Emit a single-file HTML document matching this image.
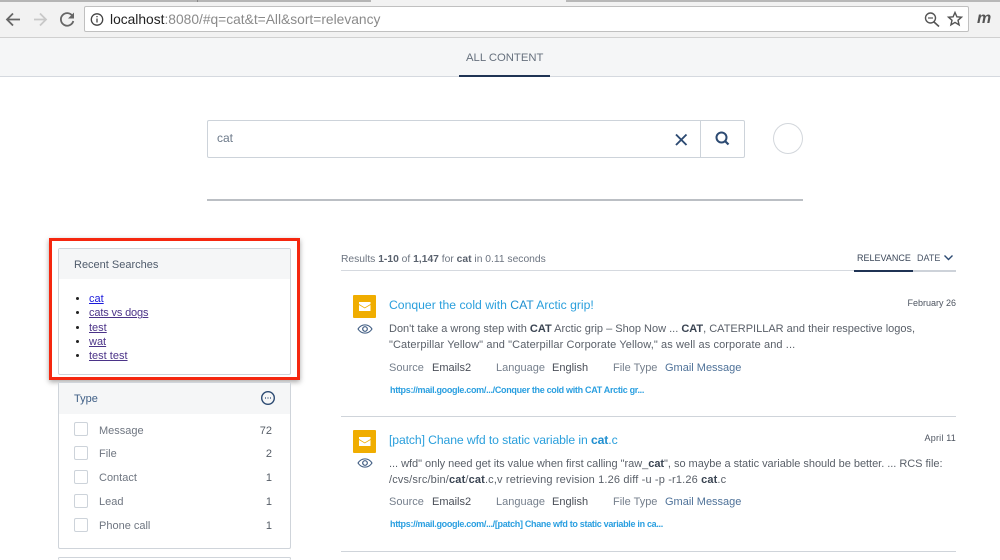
<!DOCTYPE html>
<html><head><meta charset="utf-8"><title>Search</title>
<style>
html,body{margin:0;padding:0;background:#fff;width:1000px;height:560px;overflow:hidden}
#p{width:1000px;height:560px;position:relative;overflow:hidden;font-family:"Liberation Sans",sans-serif;color:#4f5b6b}
.a{position:absolute;white-space:nowrap}
.t{position:absolute;white-space:nowrap;font-size:11px;line-height:14px}
b{font-weight:bold;color:#3a4452}
.box{position:absolute;left:58px;width:233px;background:#fff;border:1px solid #cfd4da;border-radius:2px;box-sizing:border-box}
.cb{position:absolute;left:74px;width:14px;height:14px;border:1px solid #cdd3da;border-radius:2px;box-sizing:border-box}
.lbl{color:#757f8c}
.val{color:#4a4f58}
.lnk{color:#2a9fe0;font-size:9px;font-weight:bold;letter-spacing:-.31px}
ul a{color:#4b3388;text-decoration:underline}
.s{font-size:11px;color:#5a6069}
</style></head><body><div id="p">

<!-- browser chrome -->
<div class="a" style="left:0;top:0;width:1000px;height:37px;background:#f2f2f2;border-bottom:1px solid #d0d0d0"></div>
<div class="a" style="left:0;top:0;width:371px;height:2px;background:#b5b5b5"></div>
<div class="a" style="left:197px;top:0;width:1px;height:2px;background:#888"></div>
<div class="a" style="left:566px;top:0;width:434px;height:2px;background:#b8b8b8"></div>
<div class="a" style="left:84px;top:6px;width:885px;height:26px;background:#fff;border:1px solid #c0c0c0;border-radius:2px;box-sizing:border-box"></div>
<svg class="a" style="left:0;top:0" width="110" height="37" fill="none">
<path d="M20 19.5H8M13 13.5l-6 6 6 6" stroke="#666" stroke-width="1.8"/>
<path d="M46 19.5H34M40 13.5l6 6-6 6" stroke="#c8c8c8" stroke-width="1.8"/>
<path d="M72.5 16a6.3 6.3 0 1 0 .8 5" stroke="#666" stroke-width="1.8"/>
<path d="M74 12.5v6h-6z" fill="#666"/>
<circle cx="97" cy="19.500" r="5.700" stroke="#444" stroke-width="1.300"/>
<path d="M97 18.500v4M97 16v1.300" stroke="#444" stroke-width="1.300"/>
</svg>
<div class="a" style="left:110px;top:12px;font-size:13.800px;line-height:15px;color:#8a8a8a"><span style="color:#222">localhost</span>:8080/#q=cat&amp;t=All&amp;sort=relevancy</div>
<svg class="a" style="left:920px;top:8px" width="80" height="24" fill="none">
<circle cx="10.500" cy="10" r="5" stroke="#555" stroke-width="1.400"/>
<path d="M14 14l5 4.500" stroke="#555" stroke-width="1.600"/>
<path d="M8 10h5" stroke="#555" stroke-width="1.200"/>
<path d="M35 4.500l1.900 4.300 4.600.4-3.500 3.100 1.100 4.600-4.100-2.500-4.100 2.500 1.100-4.600-3.500-3.100 4.600-.4z" stroke="#555" stroke-width="1.400"/>
</svg>
<div class="a" style="left:977px;top:10px;font-size:16px;line-height:18px;font-weight:bold;font-style:italic;color:#555">m</div>

<!-- tab bar -->
<div class="a" style="left:0;top:38px;width:1000px;height:38px;background:#f5f6f7;border-bottom:1px solid #d5d9df"></div>
<div class="a" style="left:459px;top:75px;width:91px;height:2px;background:#1f3354"></div>
<div class="a" style="left:466px;top:51px;font-size:11.300px;line-height:14px;color:#67717e">ALL CONTENT</div>

<!-- search -->
<div class="a" style="left:207px;top:120px;width:538px;height:38px;border:1px solid #cdd3da;border-radius:2px;box-sizing:border-box"></div>
<div class="a" style="left:700px;top:120px;width:1px;height:38px;background:#cdd3da"></div>
<div class="a" style="left:217px;top:130px;font-size:12px;line-height:16px;color:#6d7a8a">cat</div>
<svg class="a" style="left:670px;top:128px" width="70" height="24" fill="none">
<path d="M6 6.500l10.500 10.500M16.500 6.500L6 17" stroke="#2c4a72" stroke-width="1.900"/>
<circle cx="51.500" cy="9.500" r="5" stroke="#2c4a72" stroke-width="2"/>
<path d="M55 13l3.500 3.500" stroke="#2c4a72" stroke-width="2.200"/>
</svg>
<div class="a" style="left:773px;top:123px;width:30px;height:31px;border:1px solid #d3d7dc;border-radius:50%;box-sizing:border-box"></div>
<div class="a" style="left:207px;top:199px;width:596px;height:2px;background:#bbbfc4"></div>

<!-- recent searches -->
<div class="box" style="top:248px;height:127px">
<div style="height:30px;background:#f5f6f7"></div>
</div>
<div class="a" style="left:49px;top:238px;width:251px;height:142px;border:3px solid #f5270f;box-sizing:border-box;box-shadow:0 2px 5px rgba(0,0,0,.35)"></div>
<div class="t" style="left:74px;top:258px;color:#4f5b6b">Recent Searches</div>
<ul class="a" style="left:49px;top:292px;margin:0;padding:0 0 0 40px;font-size:11px;line-height:14.300px;color:#222">
<li><a style="color:#1a1adb">cat</a></li>
<li><a style="letter-spacing:-.15px">cats vs dogs</a></li>
<li><a>test</a></li>
<li><a>wat</a></li>
<li><a>test test</a></li>
</ul>

<!-- type facet -->
<div class="box" style="top:382px;height:167px">
<div style="height:31px;background:#f5f6f7"></div>
</div>
<div class="t" style="left:74px;top:392px;color:#3f5f86">Type</div>
<svg class="a" style="left:260px;top:390px" width="16" height="16" fill="none">
<circle cx="8" cy="8" r="6.300" stroke="#2c4a72" stroke-width="1.400"/>
<path d="M5 8h1M7.500 8h1M10 8h1" stroke="#2c4a72" stroke-width="1.300"/>
</svg>
<div class="cb" style="top:422px"></div><div class="t" style="left:99px;top:424px;color:#6f7681">Message</div><div class="t" style="left:252px;width:20px;text-align:right;top:424px;color:#555c66">72</div>
<div class="cb" style="top:446px"></div><div class="t" style="left:99px;top:447px;color:#6f7681">File</div><div class="t" style="left:252px;width:20px;text-align:right;top:447px;color:#555c66">2</div>
<div class="cb" style="top:470px"></div><div class="t" style="left:99px;top:471px;color:#6f7681">Contact</div><div class="t" style="left:252px;width:20px;text-align:right;top:471px;color:#555c66">1</div>
<div class="cb" style="top:494px"></div><div class="t" style="left:99px;top:495px;color:#6f7681">Lead</div><div class="t" style="left:252px;width:20px;text-align:right;top:495px;color:#555c66">1</div>
<div class="cb" style="top:518px"></div><div class="t" style="left:99px;top:519px;color:#6f7681">Phone call</div><div class="t" style="left:252px;width:20px;text-align:right;top:519px;color:#555c66">1</div>
<div class="box" style="top:557px;height:3px;border-bottom:0"></div>

<!-- results header -->
<div class="t" style="left:341px;color:#6c7480;font-size:10.300px;top:253px">Results <b style="color:#5a626e">1-10</b> of <b style="color:#5a626e">1,147</b> for <b style="color:#5a626e">cat</b> in 0.11 seconds</div>
<div class="a" style="left:341px;top:270px;width:615px;height:1px;background:#d5d9df"></div>
<div class="a" style="left:913px;top:270px;width:43px;height:2px;background:#cdd2d9"></div>
<div class="a" style="left:854px;top:270px;width:59px;height:2px;background:#1f3354"></div>
<div class="t" style="left:857px;top:251px;font-size:9px;color:#3a4658">RELEVANCE</div>
<div class="t" style="left:917px;top:251px;font-size:9px;color:#4a5668">DATE</div>
<svg class="a" style="left:943px;top:254px" width="11" height="8" fill="none"><path d="M1.500 1.500L5.500 5.500 9.500 1.500" stroke="#2c4a72" stroke-width="1.400"/></svg>

<!-- result 1 -->
<div class="a" style="left:353px;top:295px;width:23px;height:23px;background:#f0ad00;border-radius:1px"></div>
<svg class="a" style="left:353px;top:295px" width="23" height="23"><path d="M6 7h11.500v2l-5.750 3.500L6 9z" fill="#fff"/><path d="M6 10l5.750 3.400 5.750-3.400V16H6z" fill="#fff"/></svg>
<svg class="a" style="left:357px;top:323px" width="16" height="12" fill="none"><path d="M1 6c3.500-5.500 10.500-5.500 14 0-3.500 5.500-10.500 5.500-14 0z" stroke="#3d5a80" stroke-width="1.100"/><circle cx="8" cy="6" r="2.300" stroke="#3d5a80" stroke-width="1.200"/></svg>
<div class="a" style="left:389px;top:297px;font-size:12.200px;line-height:16px;color:#2a9fdc">Conquer the cold with <span style="color:#1f8fd0">CAT</span> Arctic grip!</div>
<div class="t" style="left:880px;width:76px;text-align:right;top:296px;font-size:9px;color:#4d5460">February 26</div>
<div class="t s" style="left:389px;top:322px">Don't take a wrong step with <b>CAT</b> Arctic grip – Shop Now ... <b>CAT</b>, CATERPILLAR and their respective logos,</div>
<div class="t s" style="left:389px;top:338px;letter-spacing:.1px">"Caterpillar Yellow" and "Caterpillar Corporate Yellow," as well as corporate and ...</div>
<div class="t lbl" style="left:389px;top:361px">Source</div><div class="t val" style="left:432px;top:361px">Emails2</div>
<div class="t lbl" style="left:496px;top:361px">Language</div><div class="t val" style="left:552px;top:361px">English</div>
<div class="t lbl" style="left:613px;top:361px">File Type</div><div class="t" style="left:665px;top:361px;color:#4f7299">Gmail Message</div>
<div class="t lnk" style="left:390px;top:383px">https://mail.google.com/.../Conquer the cold with CAT Arctic gr...</div>
<div class="a" style="left:341px;top:416px;width:615px;height:1px;background:#cfd4da"></div>

<!-- result 2 -->
<div class="a" style="left:353px;top:430px;width:23px;height:23px;background:#f0ad00;border-radius:1px"></div>
<svg class="a" style="left:353px;top:430px" width="23" height="23"><path d="M6 7h11.500v2l-5.750 3.500L6 9z" fill="#fff"/><path d="M6 10l5.750 3.400 5.750-3.400V16H6z" fill="#fff"/></svg>
<svg class="a" style="left:357px;top:457px" width="16" height="12" fill="none"><path d="M1 6c3.500-5.500 10.500-5.500 14 0-3.500 5.500-10.500 5.500-14 0z" stroke="#3d5a80" stroke-width="1.100"/><circle cx="8" cy="6" r="2.300" stroke="#3d5a80" stroke-width="1.200"/></svg>
<div class="a" style="left:389px;top:432px;font-size:12.200px;line-height:16px;letter-spacing:-.1px;color:#2a9fdc">[patch] Chane wfd to static variable in <span style="color:#1f8fd0;font-weight:bold">cat</span>.c</div>
<div class="t" style="left:880px;width:76px;text-align:right;top:431px;font-size:9px;letter-spacing:.2px;color:#4d5460">April 11</div>
<div class="t s" style="left:389px;top:457px;letter-spacing:-.03px">... wfd" only need get its value when first calling "raw_<b>cat</b>", so maybe a static variable should be better. ... RCS file:</div>
<div class="t s" style="left:389px;top:473px;letter-spacing:.15px">/cvs/src/bin/<b>cat</b>/<b>cat</b>.c,v retrieving revision 1.26 diff -u -p -r1.26 <b>cat</b>.c</div>
<div class="t lbl" style="left:389px;top:495px">Source</div><div class="t val" style="left:432px;top:495px">Emails2</div>
<div class="t lbl" style="left:496px;top:495px">Language</div><div class="t val" style="left:552px;top:495px">English</div>
<div class="t lbl" style="left:613px;top:495px">File Type</div><div class="t" style="left:665px;top:495px;color:#4f7299">Gmail Message</div>
<div class="t lnk" style="left:390px;top:517px">https://mail.google.com/.../[patch] Chane wfd to static variable in ca...</div>
<div class="a" style="left:341px;top:551px;width:615px;height:1px;background:#cfd4da"></div>
</div></body></html>
